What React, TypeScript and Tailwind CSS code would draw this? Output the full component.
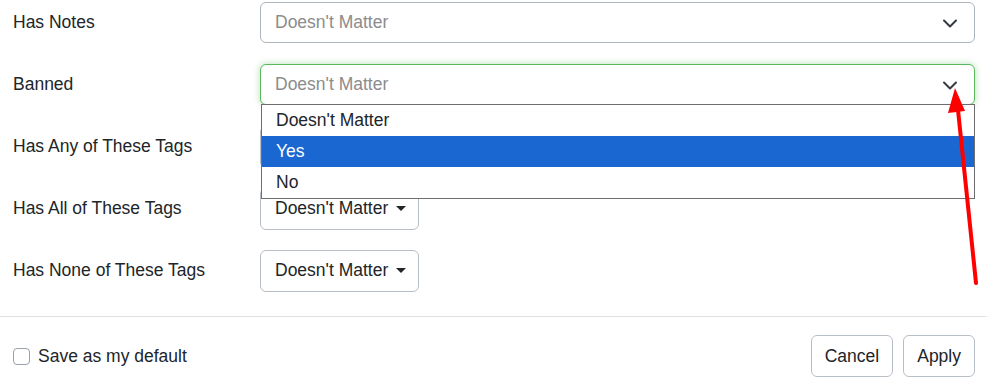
import React from 'react';

const Chevron = () => (
  <svg width="16" height="12" viewBox="0 0 16 12" className="shrink-0">
    <path d="M2 3.5l6 6 6-6" fill="none" stroke="#343a40" strokeWidth="2" strokeLinecap="round" strokeLinejoin="round" />
  </svg>
);

const Caret = () => (
  <span className="inline-block w-0 h-0 border-x-[5px] border-x-transparent border-t-[5px] border-t-[#212529]" />
);

const SelectBox = ({ focused }: { focused?: boolean }) => (
  <div
    className={
      focused
        ? 'flex-1 h-[41px] flex items-center justify-between pl-[14px] pr-[16px] rounded-[6px] border border-[#5cb85c] shadow-[0_0_6px_1px_rgba(92,184,92,0.35)] bg-white'
        : 'flex-1 h-[41px] flex items-center justify-between pl-[14px] pr-[16px] rounded-[6px] border border-[#adb5bd] bg-white'
    }
  >
    <span className="text-[#8c8c8c]">Doesn't Matter</span>
    <Chevron />
  </div>
);

// hidden: the open list sits on top of this one
const TagButton = ({ covered }: { covered?: boolean }) => (
  <div className="h-[42px] w-[159px] flex items-center gap-[8px] pl-[14px] rounded-[6px] border border-[#b8bec5] bg-white">
    <span className={covered ? 'invisible' : ''}>Doesn't Matter</span>
    <Caret />
  </div>
);

const Row = ({ label, children }: { label: string; children: React.ReactNode }) => (
  <div className="flex items-center h-[41px]">
    <div className="w-[247px] shrink-0">{label}</div>
    {children}
  </div>
);

export default function App() {
  return (
    <div
      className="relative w-[987px] h-[384px] bg-white text-[#212529] text-[17.5px] overflow-hidden"
      style={{ fontFamily: '"Liberation Sans", Arial, sans-serif' }}
    >
      <div className="flex flex-col gap-[21px] pt-[2px] pl-[13px] pr-[12px]">
        <Row label="Has Notes">
          <SelectBox />
        </Row>
        <div className="relative">
          <Row label="Banned">
            <SelectBox focused />
          </Row>
          <div className="absolute left-[248px] right-0 top-[40px] z-10 bg-white border border-[#6e6e6e]">
            <div className="h-[31px] flex items-center pl-[14px]">Doesn't Matter</div>
            <div className="h-[31px] flex items-center pl-[14px] bg-[#1a67d2] text-white">Yes</div>
            <div className="h-[31px] flex items-center pl-[14px]">No</div>
          </div>
        </div>
        <Row label="Has Any of These Tags">
          <TagButton covered />
        </Row>
        <Row label="Has All of These Tags">
          <TagButton />
        </Row>
        <Row label="Has None of These Tags">
          <TagButton />
        </Row>
      </div>

      <div className="mt-[25px] border-t border-[#dee2e6]" />

      <div className="flex items-center justify-between pl-[13px] pr-[12px] pt-[18px]">
        <label className="flex items-center gap-[8px]">
          <span className="w-[17px] h-[17px] rounded-[4px] border border-[#9aa1a8] bg-white" />
          <span>Save as my default</span>
        </label>
        <div className="flex gap-[10px]">
          <button className="h-[42px] px-[13px] rounded-[6px] border border-[#b8bec5] bg-white">Cancel</button>
          <button className="h-[42px] px-[13px] rounded-[6px] border border-[#b8bec5] bg-white">Apply</button>
        </div>
      </div>

      <svg className="absolute inset-0 z-20 pointer-events-none" width="987" height="384">
        <line x1="976" y1="283" x2="958" y2="110" stroke="#ff0000" strokeWidth="4" strokeLinecap="round" />
        <polygon points="955,88 948,113 965,111" fill="#ff0000" />
      </svg>
    </div>
  );
}
